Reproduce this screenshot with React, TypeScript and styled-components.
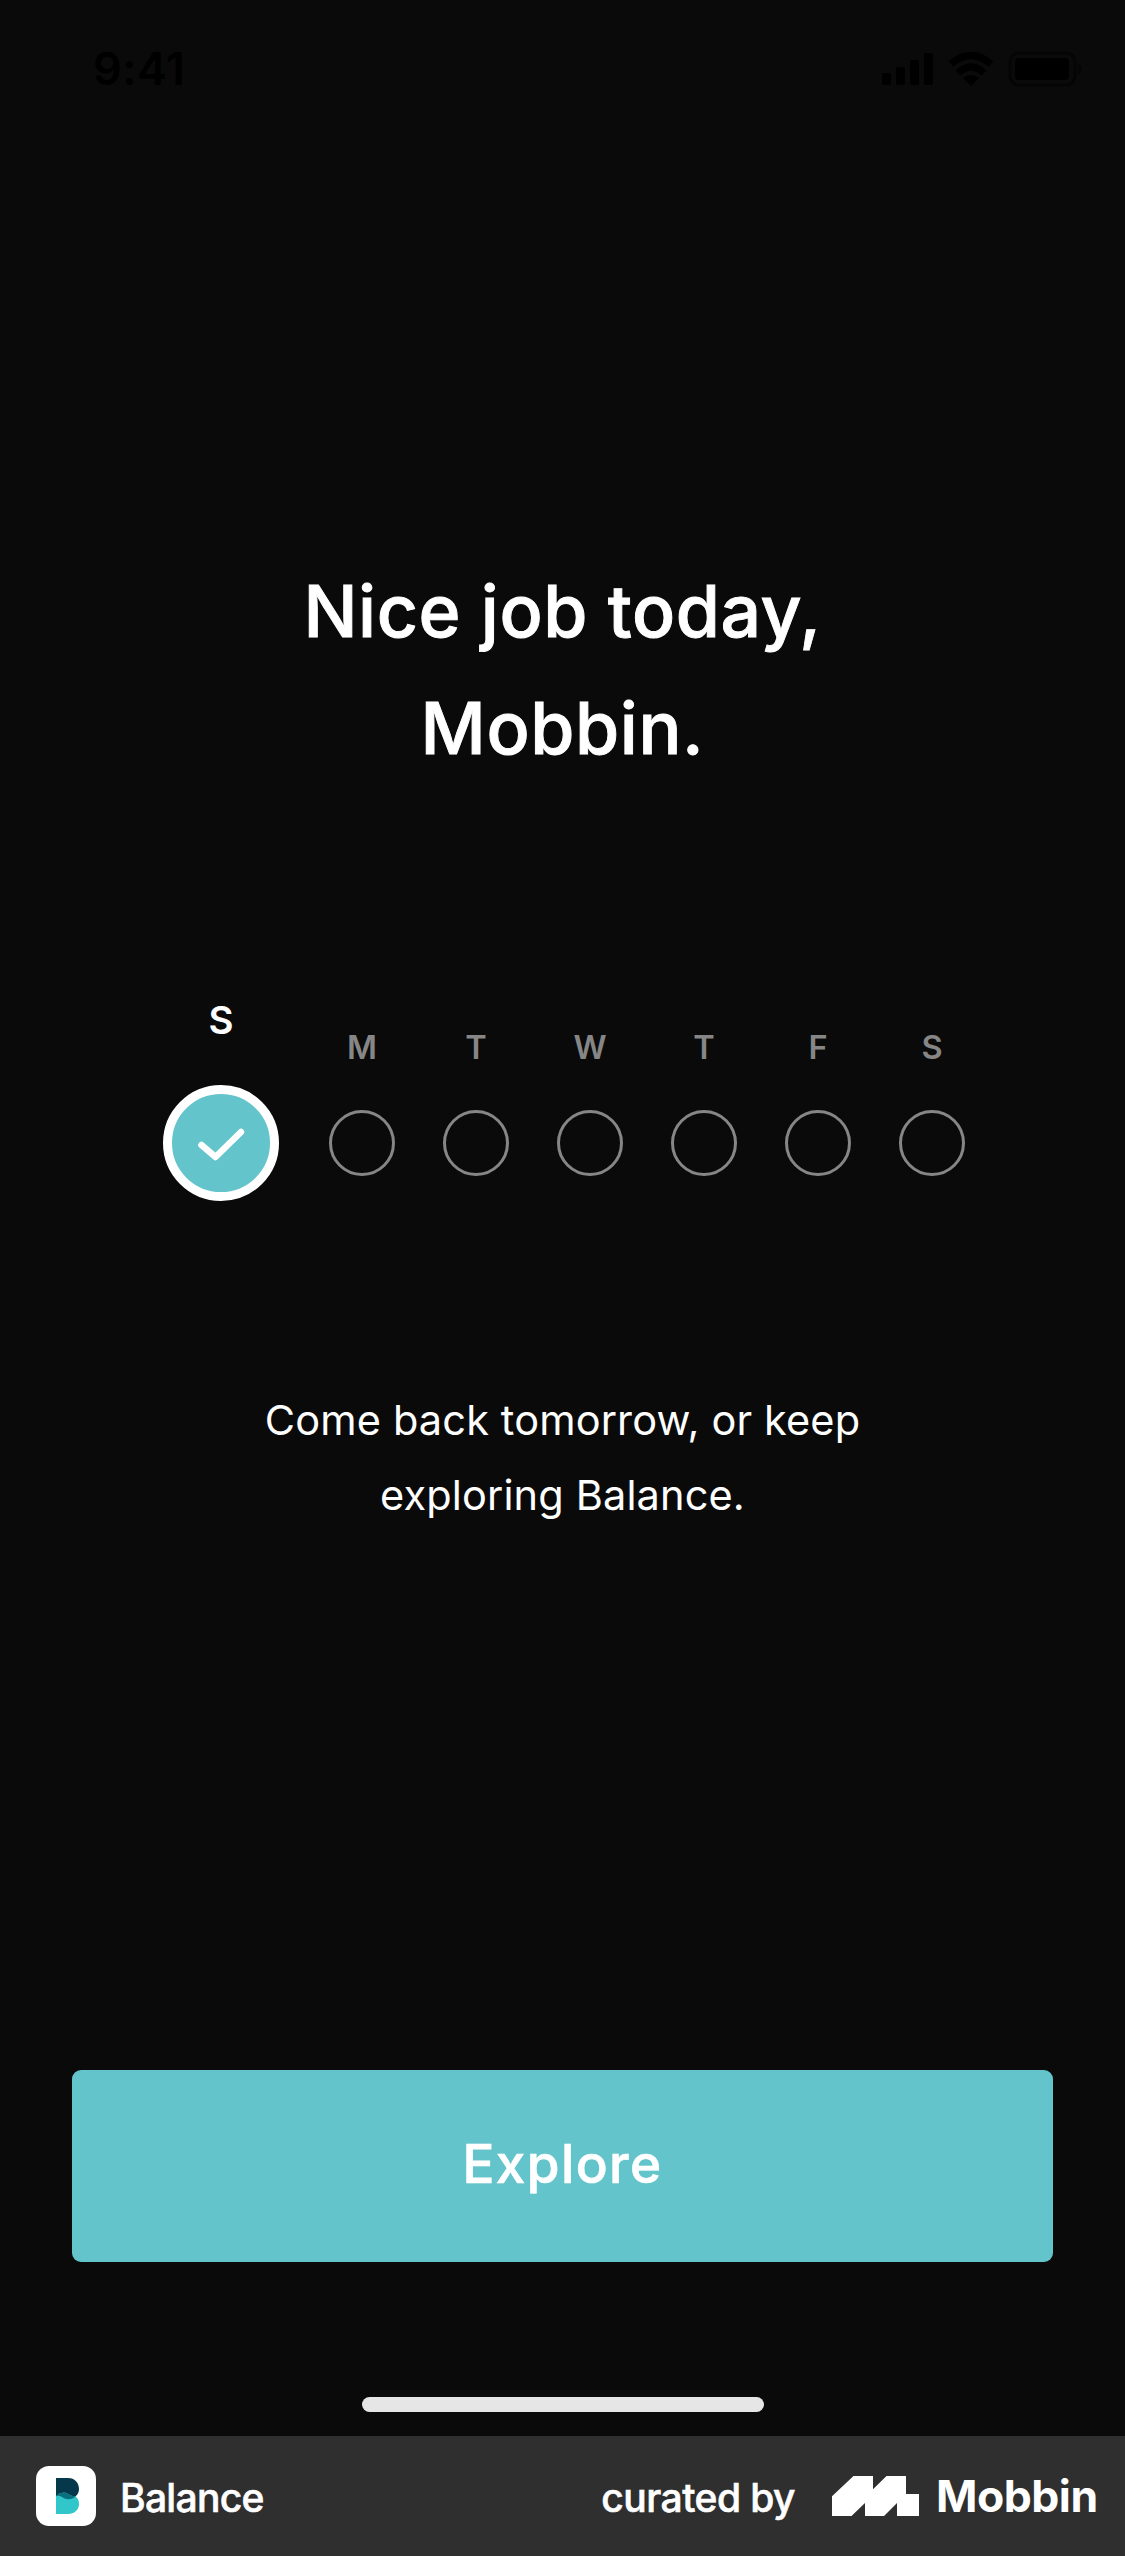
import React from "react";
import styled, { createGlobalStyle } from "styled-components";

const GlobalStyle = createGlobalStyle`
  * { box-sizing: border-box; }
  body { margin: 0; background: #0a0a0a; }
`;

const Screen = styled.div`
  width: 1125px;
  height: 2556px;
  display: flex;
  flex-direction: column;
  background: #0a0a0a;
  color: #fff;
  font-family: Inter, "Liberation Sans", sans-serif;
  overflow: hidden;
`;

const StatusBar = styled.header`
  height: 132px;
  flex: none;
  display: flex;
  justify-content: space-between;
  align-items: flex-start;
  padding: 48px 42px 0 93px;
  color: #000;
`;

const Clock = styled.span`
  font-size: 45px;
  line-height: 42px;
  font-weight: 600;
  letter-spacing: 0.4px;
`;

const StatusIcons = styled.svg`
  display: block;
  width: 204px;
  height: 42px;
`;

const Content = styled.main`
  flex: 1;
  display: flex;
  flex-direction: column;
  align-items: center;
`;

const Title = styled.h1`
  margin: 421px 0 0;
  font-size: 71.5px;
  line-height: 117px;
  font-weight: 500;
  letter-spacing: 0.6px;
  -webkit-text-stroke: 0.9px #fff;
  text-align: center;
`;

const Week = styled.div`
  align-self: stretch;
  display: flex;
  align-items: flex-end;
  gap: 48px;
  margin-top: 213px;
  padding-left: 163px;
`;

const Day = styled.div<{ $done?: boolean }>`
  width: ${(p) => (p.$done ? 116 : 66)}px;
  margin-right: ${(p) => (p.$done ? 2 : 0)}px;
  padding-bottom: ${(p) => (p.$done ? 0 : 25)}px;
  display: flex;
  flex-direction: column;
  align-items: center;
  gap: ${(p) => (p.$done ? 45 : 42)}px;
`;

const DayLabel = styled.span<{ $done?: boolean }>`
  font-size: ${(p) => (p.$done ? 38.5 : 32.5)}px;
  line-height: 40px;
  font-weight: 600;
  color: ${(p) => (p.$done ? "#fff" : "#868686")};
`;

const Marker = styled.div<{ $done?: boolean }>`
  width: ${(p) => (p.$done ? 116 : 66)}px;
  height: ${(p) => (p.$done ? 116 : 66)}px;
  border-radius: 50%;
  border: ${(p) => (p.$done ? "9px solid #fff" : "3px solid #868686")};
  background: ${(p) => (p.$done ? "#63c4cb" : "transparent")};
  display: flex;
  align-items: center;
  justify-content: center;
`;

const Message = styled.p`
  margin: 182px 0 0;
  font-size: 41.5px;
  line-height: 75px;
  font-weight: 400;
  letter-spacing: 0.14px;
  text-align: center;
`;

const ExploreButton = styled.button`
  margin: auto 0 0;
  width: 981px;
  height: 192px;
  flex: none;
  border: 0;
  border-radius: 9px;
  background: #63c4cb;
  color: #fff;
  font-family: inherit;
  font-size: 53px;
  line-height: 60px;
  font-weight: 500;
  letter-spacing: 1.4px;
  -webkit-text-stroke: 0.7px #fff;
  padding: 0 0 4px;
`;

const HomeIndicator = styled.div`
  width: 402px;
  height: 15px;
  flex: none;
  margin: 135px 0 24px 1px;
  border-radius: 8px;
  background: #e6e6e6;
`;

const Footer = styled.footer`
  height: 120px;
  flex: none;
  display: flex;
  align-items: center;
  padding: 0 27px 0 36px;
  background: #2f2f2f;
`;

const AppIcon = styled.div`
  width: 60px;
  height: 60px;
  border-radius: 13px;
  background: #fff;
  margin-right: 24px;
`;

const AppName = styled.span`
  font-size: 39px;
  line-height: 48px;
  font-weight: 500;
  letter-spacing: -0.7px;
  -webkit-text-stroke: 0.6px #fff;
  padding-top: 3px;
  white-space: nowrap;
`;

const Curated = styled(AppName)`
  margin-left: auto;
  margin-right: 37px;
  letter-spacing: -0.55px;
`;

const BrandMark = styled.svg`
  display: block;
  flex: none;
  width: 87px;
  height: 40px;
  margin-right: 17px;
`;

const BrandName = styled.span`
  width: 162px;
  font-size: 44.5px;
  line-height: 48px;
  font-weight: 700;
  letter-spacing: -0.5px;
  white-space: nowrap;
`;

const days = ["S", "M", "T", "W", "T", "F", "S"];

export default function App() {
  return (
    <Screen>
      <GlobalStyle />
      <StatusBar>
        <Clock>9:41</Clock>
        <StatusIcons viewBox="0 0 204 42">
          <rect x="3" y="25" width="9" height="12" rx="2" />
          <rect x="17" y="19" width="9" height="18" rx="2" />
          <rect x="31" y="12" width="9" height="25" rx="2" />
          <rect x="45" y="5" width="9" height="32" rx="2" />
          <g fill="none" stroke="#000" strokeWidth="7">
            <path d="M72 16 Q92 -1 112 16" />
            <path d="M79 25 Q92 13 105 25" />
          </g>
          <path d="M84 30 Q92 24 100 30 L92 38 Z" />
          <rect x="131" y="5" width="65" height="32" rx="9" fill="none" stroke="#050505" strokeWidth="3" />
          <rect x="136" y="10" width="54" height="22" rx="4" />
          <path d="M199 15 Q206 21 199 27 Z" fill="#050505" />
        </StatusIcons>
      </StatusBar>
      <Content>
        <Title>
          Nice job today,
          <br />
          Mobbin.
        </Title>
        <Week>
          {days.map((day, i) => (
            <Day key={i} $done={i === 0}>
              <DayLabel $done={i === 0}>{day}</DayLabel>
              <Marker $done={i === 0}>
                {i === 0 && (
                  <svg width="98" height="98" viewBox="0 0 98 98">
                    <path
                      d="M29.5 51 L43.5 63 L69 38"
                      fill="none"
                      stroke="#fff"
                      strokeWidth="6.5"
                      strokeLinecap="round"
                      strokeLinejoin="round"
                    />
                  </svg>
                )}
              </Marker>
            </Day>
          ))}
        </Week>
        <Message>
          Come back tomorrow, or keep
          <br />
          exploring Balance.
        </Message>
        <ExploreButton>Explore</ExploreButton>
        <HomeIndicator />
      </Content>
      <Footer>
        <AppIcon>
          <svg width="60" height="60" viewBox="0 0 60 60">
            <path d="M20 12 H32 C40 12 43 18 43 23 C43 26 42 28 39.5 30.5 C36 34 30 34 26 31 Q23 29 20 31 Z" fill="#05384a" />
            <path d="M20 30 Q24 26 28 26.5 C32 27 34 30 39.5 30.5 C42 32 43 35 43 38 C43 44 38 48 32 48 H20 Z" fill="#31c7ca" />
            <path d="M20 30 Q24 26 28 26.5 C32 27 34 30 39.5 30.5 C36 34 30 34 26 31 Q23 29 20 30 Z" fill="#08707f" />
          </svg>
        </AppIcon>
        <AppName>Balance</AppName>
        <Curated>curated by</Curated>
        <BrandMark viewBox="0 0 87 40" fill="#fff">
          <path d="M0 20.3 L21.5 0 H41 V13.3 L54.5 0 H74 V18 H87 V40 H65 V27 L52 40 H33 V27 L19.5 40 H0 Z" />
        </BrandMark>
        <BrandName>Mobbin</BrandName>
      </Footer>
    </Screen>
  );
}
